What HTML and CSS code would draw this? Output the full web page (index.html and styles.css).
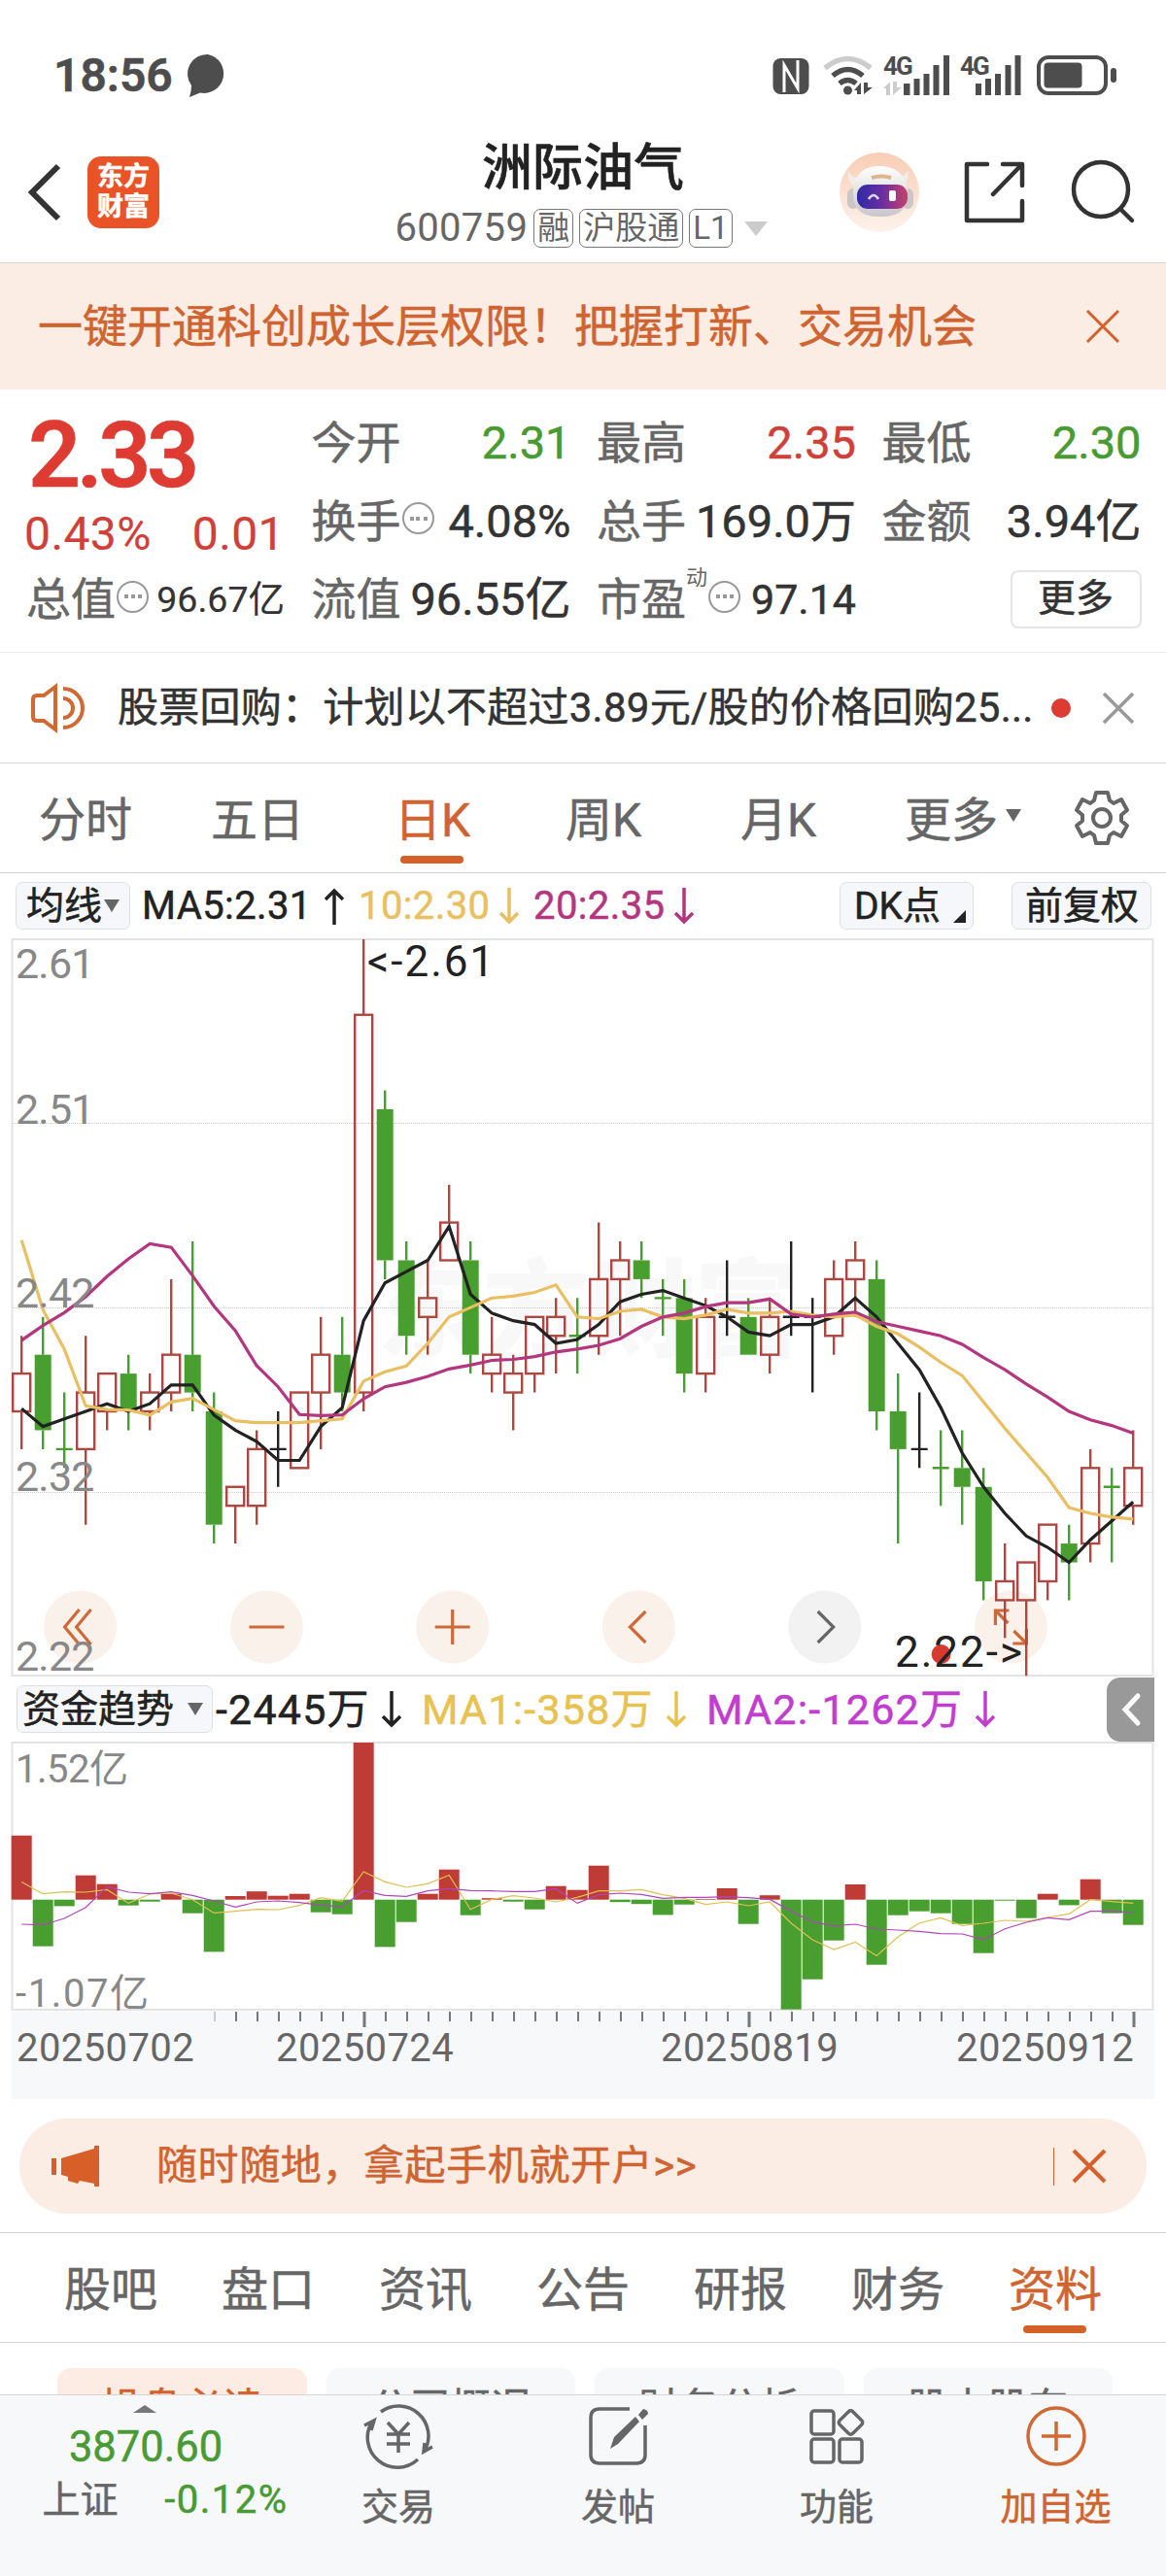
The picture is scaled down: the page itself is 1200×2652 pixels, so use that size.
FILE: index.html
```html
<!DOCTYPE html>
<html lang="zh-CN">
<head>
    <meta charset="UTF-8">
    <meta name="viewport" content="width=device-width, initial-scale=1.0">
    <title>洲际油气 600759</title>
    <link rel="stylesheet" href="styles.css">
</head>
<body>
    <div class="status-bar">
        <span class="time">18:56</span>
        <svg class="bubble" width="42" height="46" viewBox="0 0 42 46"><path d="M21 1a20 20 0 1 1-8 39.500L2 45Q4 39 4 33A20 20 0 0 1 21 1z" fill="#4d4d4d"/></svg>
        <svg class="status-icons" width="360" height="46" viewBox="793 54 360 46" fill="#4d4d4d">
            <rect x="795.500" y="59" width="37" height="37" rx="8"/>
            <path d="M807 94V66l14 24V61" fill="none" stroke="#fff" stroke-width="3"/>
            <g fill="none" stroke-width="5.500">
                <path d="M849 69q23.500-19 47 0" stroke="#ccc"/>
                <path d="M857 77q15.500-13 31 0" stroke="#4d4d4d"/>
                <path d="M864 85q8.500-7 17 0" stroke="#4d4d4d"/>
            </g>
            <circle cx="872.500" cy="92" r="4.500"/>
            <path d="M879 92l7-8v12h-4v-4zM889 84v12l9-7h-5v-5z"/>
            <text x="909" y="76" class="net">4G</text>
            <path d="M909 90l7-7v14h-4v-7zM919 83v14l9-8h-5v-6z" fill="#ccc"/>
            <path d="M930 85h6.500v12h-6.500zM940.500 80h6v17h-6zM950.500 75h6v22h-6zM960.500 66h6v31h-6zM971 56h6v41h-6z"/>
            <text x="988" y="76" class="net">4G</text>
            <path d="M1004 85h6v12h-6zM1014 80h6v17h-6zM1024 75h6v22h-6zM1034.500 66h6v31h-6zM1044.500 56h6v41h-6z"/>
            <rect x="1069" y="58" width="69" height="37" rx="10" fill="none" stroke="#4d4d4d" stroke-width="4"/>
            <rect x="1074.500" y="63.500" width="39" height="26" rx="4"/>
            <rect x="1143" y="69" width="6" height="15" rx="3"/>
        </svg>
    </div>

    <header class="nav">
        <div class="nav-left">
            <svg width="36" height="62" viewBox="0 0 36 62"><path d="M32 4L5 31l27 27" fill="none" stroke="#333" stroke-width="6"/></svg>
            <div class="app-logo"><span>东方</span><span>财富</span></div>
        </div>
        <div class="nav-title">
            <h1>洲际油气</h1>
            <div class="code-row">
                <span class="code">600759</span>
                <span class="mark">融</span>
                <span class="mark">沪股通</span>
                <span class="mark">L1</span>
                <i class="tri-down"></i>
            </div>
        </div>
        <div class="nav-right">
            <svg width="82" height="82" viewBox="0 0 82 82">
                <defs>
                    <linearGradient id="peach" x1="0" y1="0" x2="0" y2="1"><stop offset="0" stop-color="#f8cdb4"/><stop offset="1" stop-color="#fdf3ed"/></linearGradient>
                    <linearGradient id="visor" x1="0" y1="0" x2="1" y2="0"><stop offset="0" stop-color="#2f2aa5"/><stop offset=".5" stop-color="#6a2f9f"/><stop offset="1" stop-color="#c9406a"/></linearGradient>
                    <linearGradient id="head" x1="0" y1="0" x2="0" y2="1"><stop offset="0" stop-color="#fff"/><stop offset="1" stop-color="#c9c6c9"/></linearGradient>
                </defs>
                <circle cx="41" cy="41" r="41" fill="url(#peach)"/>
                <path d="M9 18q3 8 10 8l-4 8q-8-4-6-16zM70 18q-3 8-10 8l4 8q9-4 6-16z" fill="#f2ece9"/>
                <rect x="8" y="37" width="12" height="21" rx="6" fill="#ccc6c8"/>
                <rect x="64" y="37" width="12" height="21" rx="6" fill="#ccc6c8"/>
                <path d="M41 14C24 14 14 24 14 42C14 58 22 66 42 66S70 58 70 42C70 24 58 14 41 14z" fill="url(#head)"/>
                <path d="M33 26q10-3 20 0" stroke="#dcb58e" stroke-width="4" fill="none"/>
                <rect x="18" y="33" width="52" height="25" rx="11" fill="url(#visor)"/>
                <path d="M30 48q5-8 10 0" stroke="#dcd6ff" stroke-width="2.500" fill="none"/>
                <rect x="51" y="39" width="7" height="11" rx="2" fill="#fff"/>
            </svg>
            <svg width="64" height="64" viewBox="0 0 64 64" fill="none" stroke="#333" stroke-width="4.500" stroke-linecap="round" stroke-linejoin="round">
                <path d="M24 3H3v58h57V41M60 25V3H40M59 4L30 34"/>
            </svg>
            <svg width="66" height="66" viewBox="0 0 66 66" fill="none" stroke="#333" stroke-width="4.500" stroke-linecap="round">
                <circle cx="31" cy="30" r="28"/><path d="M51 50l12 12"/>
            </svg>
        </div>
    </header>

    <div class="promo">
        <span>一键开通科创成长层权限！把握打新、交易机会</span>
        <svg width="36" height="36" viewBox="0 0 36 36"><path d="M2 2l32 32M34 2L2 34" stroke="#d4602a" stroke-width="3"/></svg>
    </div>

    <section class="quote">
        <div class="price-box">
            <div class="price">2.33</div>
            <div class="change"><span>0.43%</span><span>0.01</span></div>
        </div>
        <div class="cell"><label>今开</label><b class="down">2.31</b></div>
        <div class="cell"><label>最高</label><b class="up">2.35</b></div>
        <div class="cell"><label>最低</label><b class="down">2.30</b></div>
        <div class="cell"><label>换手<i class="info"></i></label><b>4.08%</b></div>
        <div class="cell"><label>总手</label><b>169.0万</b></div>
        <div class="cell"><label>金额</label><b>3.94亿</b></div>
        <div class="cell"><label>总值<i class="info"></i></label><b class="small">96.67亿</b></div>
        <div class="cell"><label>流值</label><b>96.55亿</b></div>
        <div class="cell"><label>市盈<sup>动</sup><i class="info"></i></label><b class="mid">97.14</b></div>
        <div class="cell more-cell"><span class="more">更多</span></div>
    </section>

    <div class="news">
        <svg width="56" height="50" viewBox="0 0 56 50" fill="none" stroke="#d06a35" stroke-width="4">
            <path d="M26 3L14 12H7q-4 0-4 4v18q0 4 4 4h7l12 9z"/>
            <path d="M34 5a20 20 0 0 1 0 40M34 15a10 10 0 0 1 0 20"/>
        </svg>
        <p>股票回购：计划以不超过3.89元/股的价格回购25...</p>
        <i class="dot"></i>
        <svg width="34" height="34" viewBox="0 0 34 34"><path d="M2 2l30 30M32 2L2 32" stroke="#999" stroke-width="3.500"/></svg>
    </div>

    <nav class="period-tabs">
        <a>分时</a>
        <a>五日</a>
        <a class="active">日K</a>
        <a>周K</a>
        <a>月K</a>
        <a>更多<i class="tri-down"></i></a>
        <a class="setting">
            <svg width="58" height="58" viewBox="-29 -29 58 58" fill="none" stroke="#666" stroke-width="4" stroke-linejoin="round">
                <path d="M-6-26H6L8-18L12-15L20-19L26-8L20-3V3L26 8L20 19L12 15L8 18L6 26H-6L-8 18L-12 15L-20 19L-26 8L-20 3V-3L-26-8L-20-19L-12-15L-8-18z"/>
                <circle r="9"/>
            </svg>
        </a>
    </nav>

    <div class="ma-row">
        <span class="tag">均线<i class="tri-down"></i></span>
        <span class="ma ma5">MA5:2.31<svg class="arrow" viewBox="0 0 22 38"><path d="M11 38V3M2 12l9-9 9 9"/></svg></span>
        <span class="ma ma10">10:2.30<svg class="arrow" viewBox="0 0 22 38"><path d="M11 0v35M2 26l9 9 9-9"/></svg></span>
        <span class="ma ma20">20:2.35<svg class="arrow" viewBox="0 0 22 38"><path d="M11 0v35M2 26l9 9 9-9"/></svg></span>
        <span class="tag dk">DK点<i class="corner"></i></span>
        <span class="tag fq">前复权</span>
    </div>

    <svg id="kline" class="chart" width="1200" height="760" viewBox="0 966 1200 760"></svg>

    <div class="fund-row">
        <span class="tag">资金趋势<i class="tri-down"></i></span>
        <span class="ma net-in">-2445万<svg class="arrow" viewBox="0 0 22 38"><path d="M11 0v35M2 26l9 9 9-9"/></svg></span>
        <span class="ma ma1">MA1:-358万<svg class="arrow" viewBox="0 0 22 38"><path d="M11 0v35M2 26l9 9 9-9"/></svg></span>
        <span class="ma ma2">MA2:-1262万<svg class="arrow" viewBox="0 0 22 38"><path d="M11 0v35M2 26l9 9 9-9"/></svg></span>
        <span class="fold"><svg width="20" height="34" viewBox="0 0 20 34"><path d="M17 3L4 17l13 14" fill="none" stroke="#fff" stroke-width="5" stroke-linecap="round"/></svg></span>
    </div>

    <svg id="fund" class="chart" width="1200" height="368" viewBox="0 1793 1200 368"></svg>

    <div class="open-account">
        <svg width="50" height="42" viewBox="0 0 50 42" fill="#d95f28"><path d="M0 13h5v17H0zM10 13L44 3V0h5v42h-5v-3l-15-3-2 3-10-3v-4l-7-2z"/></svg>
        <span>随时随地，拿起手机就开户&gt;&gt;</span>
        <i class="bar"></i>
        <svg width="36" height="36" viewBox="0 0 36 36"><path d="M2 2l32 32M34 2L2 34" stroke="#d4602a" stroke-width="4"/></svg>
    </div>

    <nav class="info-tabs">
        <a>股吧</a><a>盘口</a><a>资讯</a><a>公告</a><a>研报</a><a>财务</a><a class="active">资料</a>
    </nav>

    <div class="chips">
        <span class="on">操盘必读</span><span>公司概况</span><span>财务分析</span><span>股本股东</span>
    </div>

    <footer class="bottom-bar">
        <div class="index">
            <i class="tri-up"></i>
            <div class="index-value">3870.60</div>
            <div class="index-name"><span>上证</span><span class="down">-0.12%</span></div>
        </div>
        <a>
            <svg width="74" height="66" viewBox="-37 -33 74 66" fill="none" stroke="#666" stroke-width="3.500">
                <path d="M-18-25A30.800 30.800 0 0 1 27 15M20 24A30.800 30.800 0 0 1-27-15"/>
                <path d="M-35-11l10-5-3 10M35 11l-9 5 1-9"/>
                <path d="M-11-14L0-2l11-12M0-2v19M-12-2h24M-12 8h24"/>
            </svg>
            交易
        </a>
        <a>
            <svg width="64" height="66" viewBox="0 0 64 66" fill="none" stroke="#666" stroke-width="3.500">
                <path d="M44 5H13q-9 0-9 9v38q0 9 9 9h38q9 0 9-9V22"/>
                <path d="M24 46l4-12L50 13l4 5L32 41z" fill="#666" stroke="none"/>
                <path d="M53 11l5-6q5 1 5 5l-6 6z" fill="#666" stroke="none"/>
            </svg>
            发帖
        </a>
        <a>
            <svg width="60" height="66" viewBox="0 0 60 66" fill="none" stroke="#666" stroke-width="3.500">
                <rect x="4" y="7" width="23" height="24" rx="3"/>
                <rect x="4" y="36" width="23" height="24" rx="3"/>
                <rect x="33" y="36" width="23" height="24" rx="3"/>
                <rect x="35" y="9.500" width="19" height="19" rx="3" transform="rotate(45 44.500 19)"/>
            </svg>
            功能
        </a>
        <a class="add">
            <svg width="66" height="66" viewBox="-33 -33 66 66" fill="none" stroke="#d06a35" stroke-width="3.500">
                <circle r="29"/><path d="M-15 0h30M0-15v30"/>
            </svg>
            加自选
        </a>
    </footer>

    <script>
        // 日K数据：开盘, 收盘, 最低, 最高
        const days = [
            [2.36, 2.38, 2.34, 2.40], [2.39, 2.35, 2.34, 2.41], [2.34, 2.34, 2.33, 2.37, 'g'], [2.34, 2.37, 2.30, 2.40],
            [2.36, 2.38, 2.35, 2.38], [2.38, 2.36, 2.35, 2.39], [2.36, 2.37, 2.35, 2.38], [2.37, 2.39, 2.36, 2.43],
            [2.39, 2.37, 2.36, 2.45], [2.36, 2.30, 2.29, 2.37], [2.31, 2.32, 2.29, 2.32], [2.31, 2.34, 2.30, 2.35],
            [2.34, 2.34, 2.32, 2.36], [2.33, 2.37, 2.33, 2.37], [2.37, 2.39, 2.34, 2.41], [2.39, 2.37, 2.36, 2.41],
            [2.37, 2.57, 2.36, 2.61], [2.52, 2.44, 2.43, 2.53], [2.44, 2.40, 2.39, 2.45], [2.41, 2.42, 2.39, 2.44],
            [2.44, 2.46, 2.44, 2.48], [2.44, 2.39, 2.38, 2.45], [2.38, 2.39, 2.37, 2.41], [2.37, 2.38, 2.35, 2.39],
            [2.38, 2.41, 2.37, 2.41], [2.40, 2.41, 2.38, 2.42], [2.40, 2.40, 2.38, 2.42, 'g'], [2.40, 2.43, 2.39, 2.46],
            [2.43, 2.44, 2.40, 2.45], [2.44, 2.43, 2.42, 2.45], [2.42, 2.42, 2.40, 2.43, 'g'], [2.42, 2.38, 2.37, 2.43],
            [2.38, 2.41, 2.37, 2.42], [2.41, 2.41, 2.40, 2.44], [2.41, 2.39, 2.39, 2.42], [2.39, 2.41, 2.38, 2.42],
            [2.41, 2.41, 2.40, 2.45], [2.41, 2.41, 2.37, 2.42], [2.40, 2.43, 2.39, 2.44], [2.43, 2.44, 2.41, 2.45],
            [2.43, 2.36, 2.35, 2.44], [2.36, 2.34, 2.29, 2.38], [2.34, 2.34, 2.33, 2.37], [2.33, 2.33, 2.31, 2.35, 'g'],
            [2.33, 2.32, 2.30, 2.35], [2.32, 2.27, 2.26, 2.33], [2.26, 2.27, 2.24, 2.29], [2.26, 2.28, 2.22, 2.28],
            [2.27, 2.30, 2.26, 2.30], [2.29, 2.28, 2.26, 2.30], [2.29, 2.33, 2.28, 2.34], [2.32, 2.32, 2.28, 2.33, 'g'],
            [2.31, 2.33, 2.30, 2.35]
        ];

        // 均线开头几天要用更早的数据，直接给值
        const ma5Head = [2.3615, 2.352, 2.356, 2.360];
        const ma10Head = [2.4507, 2.4138, 2.3929, 2.3629, 2.361, 2.3607, 2.358, 2.365, 2.3669];
        const ma20Head = [2.3976, 2.4054, 2.4123, 2.4207, 2.4315, 2.4408, 2.4488, 2.4469, 2.4318, 2.4157,
            2.4027, 2.3842, 2.3730, 2.3583, 2.3578, 2.3581, 2.3667, 2.3730, 2.3754];

        // 资金趋势
        const flow = [66, -48, -6.7, 25, 16, -6, -2, 6, -14, -53.7, 3.7, 8.5, 4, 6, -13, -15, 161.7, -48.7, -23, 6, 31,
            -16, 1.5, -2, -10, 14, 10, 35, -2.5, -4.5, -15.7, -5, 0.7, 11.7, -25, 4.5, -113, -82, -42, 15.7, -67, -16,
            -12, -14, -25, -55, -1, -19, 6, -5.7, 21, -14, -26];
        const flowMa1 = [55, 18, 24, 23, 31, -11, 17, 20, 0, -41, -36, -30, -31, -18, 6, -5, 86, 55, 38, 49, 76, -30, 1,
            12, 5, -7, 7, 27, 27, 31, 15, 4, -15, -7, -19, -7, -73, -124, -154, -131, -173, -115, -72, -56, -80, -73,
            -64, -67, -55, -44, 0, -6, -11];
        const flowMa2 = [-76, -78, -58, -24, 40, 23, 18, 24, 13, -4, -23, -7, -4, -9, -17, -22, 28, 13, 10, 27, 34, 28,
            27, 25, 25, 34, -11, 15, 20, 16, 4, 7, 7, 9, 6, 1, -35, -69, -81, -76, -91, -94, -98, -105, -106, -123,
            -90, -70, -56, -62, -36, -36, -40];

        const x = i => 22.2 + i * 22;
        const y = p => 967 + (2.61 - p) * 1944;

        function line(values, toY, cls) {
            return `<polyline class="${cls}" points="${values.map((v, i) => x(i).toFixed(1) + ',' + toY(v).toFixed(1)).join(' ')}"/>`;
        }

        function average(n, head) {
            return days.map((d, i) => {
                if (i < n - 1) return head[i];
                let sum = 0;
                for (let k = i - n + 1; k <= i; k++) sum += days[k][1];
                return sum / n;
            });
        }

        function drawKline() {
            let s = '<text x="388" y="1388" class="watermark">东方财富</text>';
            s += '<rect x="12.5" y="967" width="1174" height="758" class="frame"/>';
            [1156.5, 1346.5, 1536.5].forEach(v => s += `<path d="M13 ${v}H1187" class="grid"/>`);

            // 底部操作按钮
            const buttons = [
                [82.6, 'M-1-18l-15 18 15 18M11-18l-15 18 15 18'],
                [274.4, 'M-18 0h36'],
                [465.7, 'M-18 0h36M0-18v36'],
                [657.4, 'M7-16l-16 16 16 16'],
                [848.7, 'M-7-16l16 16-16 16'],
                [1040.4, 'M-16-2v-15h14M-15-16l12 12M3 4l12 12M16 2v15h-14']
            ];
            buttons.forEach(([cx, d], i) => {
                s += `<g transform="translate(${cx} 1675)" class="ctrl${i === 4 ? ' off' : ''}"><circle r="37.5"/><path d="${d}"/></g>`;
            });
            s += '<circle cx="968.600" cy="1703" r="10" fill="#d93a30"/>';

            days.forEach(([open, close, low, high, flag], i) => {
                const cls = close > open ? 'rise' : close < open || flag ? 'fall' : 'flat';
                const top = y(Math.max(open, close)), bottom = y(Math.min(open, close)), cx = x(i);
                s += `<g class="${cls}">`;
                if (open === close) {
                    s += `<path d="M${cx} ${y(high)}V${y(low)}M${cx - 8.500} ${top}h17"/>`;
                } else {
                    s += `<path d="M${cx} ${y(high)}V${top}M${cx} ${bottom}V${y(low)}"/>`;
                    s += cls === 'rise'
                        ? `<rect x="${cx - 9}" y="${top}" width="18" height="${bottom - top}"/>`
                        : `<rect x="${cx - 8.500}" y="${top}" width="17" height="${bottom - top}"/>`;
                }
                s += '</g>';
            });

            s += line(average(5, ma5Head), y, 'l5') + line(average(10, ma10Head), y, 'l10') + line(average(20, ma20Head), y, 'l20');

            [['2.61', 1007], ['2.51', 1157], ['2.42', 1346], ['2.32', 1535], ['2.22', 1720]].forEach(([t, ty]) => {
                s += `<text x="16" y="${ty}" class="scale">${t}</text>`;
            });
            s += '<text x="378" y="1005" class="peak">&lt;-2.61</text>';
            s += '<text x="921" y="1716" class="peak">2.22-&gt;</text>';
            document.getElementById('kline').innerHTML = s;
        }

        function drawFund() {
            const zero = 1955.7;
            let s = '<rect x="12.5" y="1794" width="1174" height="275" class="frame"/>';
            s += '<rect x="12" y="2071" width="1176" height="90" fill="#f7f8fa"/>';
            flow.forEach((v, i) => {
                s += `<rect x="${x(i) - 10.500}" y="${v > 0 ? zero - v : zero}" width="21" height="${Math.abs(v)}" fill="${v > 0 ? '#be3b36' : '#489e2e'}"/>`;
            });
            s += line(flowMa1, v => zero - v / 3, 'f1') + line(flowMa2, v => zero - v / 3, 'f2');
            // 刻度
            for (let i = 9; i < days.length; i++) {
                const big = [16, 34, 52].includes(i);
                s += `<path d="M${x(i) + 0.800} 2071v${big ? 16 : 10}" stroke="${i === 9 ? '#ccc' : '#777'}" stroke-width="${big ? 3 : 2}"/>`;
            }
            s += '<text x="16" y="1835" class="vol">1.52亿</text><text x="16" y="2066" class="vol wide">-1.07亿</text>';
            [['20250702', 17], ['20250724', 284], ['20250819', 680], ['20250912', 984]].forEach(([t, tx]) => {
                s += `<text x="${tx}" y="2122" class="date">${t}</text>`;
            });
            document.getElementById('fund').innerHTML = s;
        }

        drawKline();
        drawFund();
    </script>
</body>
</html>
```
FILE: styles.css
```css
* {
    box-sizing: border-box;
    margin: 0;
    padding: 0;
}

body {
    width: 1200px;
    height: 2652px;
    overflow: hidden;
    font-family: Roboto, "Noto Sans CJK SC", sans-serif;
    background-color: #fff;
    color: #333;
    -webkit-text-stroke: 0.5px;
}

i {
    font-style: normal;
}

svg {
    display: block;
    flex-shrink: 0;
    overflow: visible;
}

svg text {
    -webkit-text-stroke: 0;
}

/* 状态栏 */
.status-bar {
    display: flex;
    align-items: center;
    height: 126px;
    padding: 30px 47px 0 55px;
}

.time {
    font-size: 48px;
    font-weight: 600;
    line-height: 48px;
    color: #4d4d4d;
}

.bubble {
    margin-left: 15px;
}

.status-icons {
    margin-left: auto;
}

.net {
    font-size: 26px;
    font-weight: 700;
    letter-spacing: -2px;
}

/* 顶部导航 */
.nav {
    display: grid;
    grid-template-columns: 1fr auto 1fr;
    align-items: center;
    height: 145px;
    border-bottom: 1px solid #d5d5d5;
}

.nav-left {
    display: flex;
    align-items: center;
    gap: 26px;
    padding-left: 28px;
}

.app-logo {
    display: flex;
    flex-direction: column;
    align-items: center;
    justify-content: center;
    width: 74px;
    height: 74px;
    border-radius: 14px;
    background-color: #ea5328;
    color: #fff;
    font-size: 27px;
    font-weight: 700;
    line-height: 31px;
}

.nav-title h1 {
    padding-top: 2px;
    font-size: 52px;
    font-weight: 500;
    line-height: 62px;
    text-align: center;
    color: #222;
}

.code-row {
    display: flex;
    align-items: center;
    gap: 6px;
    height: 40px;
    margin: 10px 2px 0 -2px;
    font-size: 40px;
    line-height: 40px;
    color: #666;
}

.code {
    letter-spacing: 0.3px;
    -webkit-text-stroke: 0;
}

.mark {
    height: 40px;
    padding: 0 3px;
    border: 1px solid #777;
    border-radius: 7px;
    font-size: 33px;
    line-height: 38px;
    -webkit-text-stroke: 0;
}

.tri-down {
    border: 8px solid transparent;
    border-top: 13px solid #666;
    border-bottom: 0;
}

.code-row .tri-down {
    margin-left: 6px;
    border-width: 15px 12px 0;
    border-top-color: #ccc;
}

.nav-right {
    display: flex;
    align-items: center;
    justify-content: flex-end;
    gap: 46px;
    padding-right: 32px;
}

/* 广告条 */
.promo {
    display: flex;
    align-items: center;
    justify-content: space-between;
    height: 130px;
    padding: 0 47px 0 39px;
    background-color: #fbece4;
    color: #d06430;
    font-size: 46px;
    line-height: 60px;
}

/* 行情 */
.quote {
    display: grid;
    grid-template-columns: repeat(4, 266px);
    grid-auto-rows: 80.5px;
    column-gap: 27.5px;
    height: 271px;
    padding: 15px 0 0 27px;
    border-bottom: 1px solid #ececec;
}

.price-box {
    grid-row: span 2;
    color: #de3b32;
}

.price {
    height: 102px;
    padding-left: 2px;
    font-size: 95px;
    font-weight: 600;
    line-height: 105px;
    letter-spacing: -4.5px;
}

.change {
    display: flex;
    justify-content: space-between;
    margin-left: -2px;
    font-size: 48px;
    line-height: 64px;
    letter-spacing: 0.4px;
    color: #cf4038;
    -webkit-text-stroke: 0.2px;
}

.cell {
    display: flex;
    align-items: center;
    justify-content: space-between;
    white-space: nowrap;
}

.cell label {
    display: flex;
    align-items: center;
    font-size: 46px;
    line-height: 60px;
    color: #666;
}

.cell b {
    margin-right: -1px;
    font-size: 47px;
    font-weight: 400;
    line-height: 60px;
}

.cell b.small {
    margin-right: 0;
    font-size: 37.5px;
    -webkit-text-stroke: 0.2px;
}

.cell b.mid {
    font-size: 43px;
}

.cell b.up {
    color: #cf4038;
}

.down,
.cell b.down {
    color: #489a33;
}

.cell sup {
    align-self: flex-start;
    margin-top: -4px;
    font-size: 22px;
    line-height: 24px;
    -webkit-text-stroke: 0;
}

.info {
    width: 33px;
    height: 33px;
    margin: -6px 0 0 1px;
    border: 2px solid #999;
    border-radius: 50%;
    background: radial-gradient(circle 2.5px, #999 90%, transparent) center / 8px 8px no-repeat,
        radial-gradient(circle 2.5px, #999 90%, transparent) 4px center / 8px 8px no-repeat,
        radial-gradient(circle 2.5px, #999 90%, transparent) 18px center / 8px 8px no-repeat;
}

.more-cell {
    justify-content: flex-end;
}

.more {
    width: 135px;
    height: 60px;
    margin-right: -1px;
    border: 2px solid #e5e5e5;
    border-radius: 8px;
    font-size: 39px;
    line-height: 55px;
    text-align: center;
}

/* 公告 */
.news {
    display: flex;
    align-items: center;
    height: 114px;
    padding-left: 31px;
    border-bottom: 1px solid #d5d5d5;
}

.news p {
    width: 940px;
    margin-left: 34px;
    font-size: 42px;
    line-height: 60px;
    letter-spacing: 0.25px;
    white-space: nowrap;
}

.dot {
    width: 20px;
    height: 20px;
    margin: 0 32px 0 21px;
    border-radius: 50%;
    background-color: #de3b32;
}

/* 周期切换 */
.period-tabs {
    display: grid;
    grid-template-columns: 176px 178px 182px 170px 190px 190px 96px;
    height: 113px;
    border-bottom: 1px solid #d5d5d5;
}

.period-tabs a,
.info-tabs a {
    position: relative;
    display: flex;
    align-items: center;
    justify-content: center;
    padding-bottom: 5px;
    font-size: 48px;
    color: #666;
}

.period-tabs a.setting {
    padding-bottom: 0;
}

.period-tabs .tri-down {
    margin-left: 8px;
}

.period-tabs a.active,
.info-tabs a.active {
    color: #d06430;
}

.period-tabs a.active::after,
.info-tabs a.active::after {
    content: "";
    position: absolute;
    bottom: 9px;
    left: 50%;
    width: 65px;
    height: 8px;
    margin-left: -33px;
    border-radius: 4px;
    background-color: #d4602a;
}

/* 指标行 */
.ma-row,
.fund-row {
    display: flex;
    align-items: center;
    position: relative;
    white-space: nowrap;
}

.ma-row {
    height: 67px;
    padding-left: 16px;
}

.tag {
    display: flex;
    align-items: center;
    height: 49px;
    padding-left: 10px;
    border: 1px solid #dcdfe3;
    border-radius: 7px;
    background-color: #f5f7fa;
    font-size: 39px;
    line-height: 46px;
    color: #222;
}

.ma-row .tag:first-child {
    width: 118px;
}

.tag .tri-down {
    margin-left: 2px;
}

.ma {
    display: flex;
    align-items: center;
    justify-content: space-between;
    font-size: 40px;
    line-height: 46px;
    letter-spacing: 0.4px;
    color: #222;
}

.arrow {
    width: 22px;
    height: 38px;
    fill: none;
    stroke: currentColor;
    stroke-width: 3.5;
}

.ma5 {
    width: 209px;
    margin-left: 12px;
}

.ma10,
.ma20 {
    width: 166px;
    margin-left: 14px;
}

.ma.ma10 {
    color: #eabf62;
}

.ma.ma20 {
    color: #b3367f;
}

.dk {
    width: 138px;
    margin-left: auto;
    padding-left: 14px;
}

.corner {
    align-self: flex-end;
    margin: 0 0 6px 13px;
    border-left: 13px solid transparent;
    border-bottom: 13px solid #222;
}

.fq {
    width: 144px;
    margin: 0 15px 0 39px;
    padding-left: 13px;
}

.fund-row {
    height: 67px;
    padding-left: 17px;
}

.fund-row .tag {
    width: 202px;
    padding-left: 5px;
}

.fund-row .tri-down {
    margin-left: 14px;
}

.fund-row .ma {
    font-size: 43px;
    letter-spacing: 1.2px;
}

.net-in {
    width: 192px;
    margin-left: 3px;
}

.ma.ma1 {
    width: 273px;
    margin-left: 20px;
    color: #e8c250;
}

.ma.ma2 {
    width: 298px;
    margin-left: 20px;
    color: #c13ccf;
}

.fold {
    display: flex;
    align-items: center;
    justify-content: center;
    width: 49px;
    height: 66px;
    margin: 0 12px 0 auto;
    border-radius: 14px 0 0 14px;
    background-color: #999;
}

/* 图表 */
.frame {
    fill: none;
    stroke: #e3e3e3;
    stroke-width: 2;
}

.grid {
    stroke: #ccc;
    stroke-width: 1;
    stroke-dasharray: 1 1;
}

.watermark {
    font-size: 109px;
    font-weight: 900;
    fill: #f8f8f8;
}

.rise {
    stroke: #ad4740;
    stroke-width: 2.4;
    fill: none;
}

.fall {
    stroke: #489e2e;
    stroke-width: 2.4;
    fill: #489e2e;
}

.fall rect {
    stroke: none;
}

.flat {
    stroke: #222;
    stroke-width: 2.4;
}

.l5,
.l10,
.l20,
.f1,
.f2 {
    fill: none;
    stroke-width: 3.2;
}

.l5 {
    stroke: #222;
}

.l10 {
    stroke: #eabf62;
}

.l20 {
    stroke: #b3367f;
}

.f1 {
    stroke: #e0c050;
    stroke-width: 1.2;
}

.f2 {
    stroke: #b045bd;
    stroke-width: 1.2;
}

.scale {
    font-size: 43px;
    letter-spacing: -0.8px;
    fill: #888;
}

.peak {
    font-size: 44px;
    letter-spacing: 2px;
    fill: #222;
}

.vol {
    font-size: 40px;
    letter-spacing: -0.5px;
    fill: #888;
}

.vol.wide {
    letter-spacing: 1.6px;
}

.date {
    font-size: 40px;
    letter-spacing: 0.4px;
    fill: #666;
}

.ctrl circle {
    fill: #fbf1eb;
}

.ctrl path {
    fill: none;
    stroke: #cf6a38;
    stroke-width: 3.2;
}

.ctrl.off circle {
    fill: #f2f2f2;
}

.ctrl.off path {
    stroke: #666;
}

/* 开户 */
.open-account {
    display: flex;
    align-items: center;
    height: 98px;
    margin: 20px 20px 19px;
    padding: 0 41px 0 33px;
    border-radius: 49px;
    background-color: #fbece4;
    color: #d06430;
    font-size: 42px;
    line-height: 60px;
}

.open-account span {
    margin-left: 58px;
    letter-spacing: 0.6px;
}

.bar {
    width: 1px;
    height: 39px;
    margin: 0 18px 0 auto;
    background-color: #d06430;
}

.info-tabs {
    display: grid;
    grid-template-columns: repeat(7, 162px);
    height: 114px;
    padding-left: 33px;
    border-top: 1px solid #d5d5d5;
    border-bottom: 1px solid #d5d5d5;
}

.chips {
    display: flex;
    gap: 20px;
    height: 53px;
    padding: 26px 0 0 59px;
    overflow: hidden;
}

.chips span {
    width: 256.5px;
    height: 80px;
    flex-shrink: 0;
    border-radius: 14px;
    background-color: #f7f8fa;
    color: #666;
    font-size: 41.5px;
    line-height: 84px;
    text-align: center;
}

.chips .on {
    background-color: #fdece4;
    color: #d4602a;
}

/* 底部栏 */
.bottom-bar {
    display: grid;
    grid-template-columns: 297px 226px 226px 224px 227px;
    position: relative;
    height: 187px;
    border-top: 1px solid #d5d5d5;
    background-color: #f7f8fa;
    color: #666;
}

.bottom-bar a {
    display: flex;
    flex-direction: column;
    align-items: center;
    padding-top: 9px;
    font-size: 38px;
    line-height: 80px;
}

.bottom-bar .add {
    color: #d06430;
}

.tri-up {
    width: 0;
    border: 12px solid transparent;
    border-top: 0;
    border-bottom: 8px solid #777;
}

.index {
    display: flex;
    flex-direction: column;
    align-items: center;
    padding-top: 10px;
}

.index-value {
    margin: 6px 0 0 3px;
    font-size: 43.5px;
    line-height: 60px;
    color: #489a33;
}

.index-name {
    display: flex;
    justify-content: space-between;
    width: 253px;
    margin-left: 43px;
    font-size: 39px;
    line-height: 48px;
}

.index-name .down {
    font-size: 40px;
    letter-spacing: 1.5px;
}
```
